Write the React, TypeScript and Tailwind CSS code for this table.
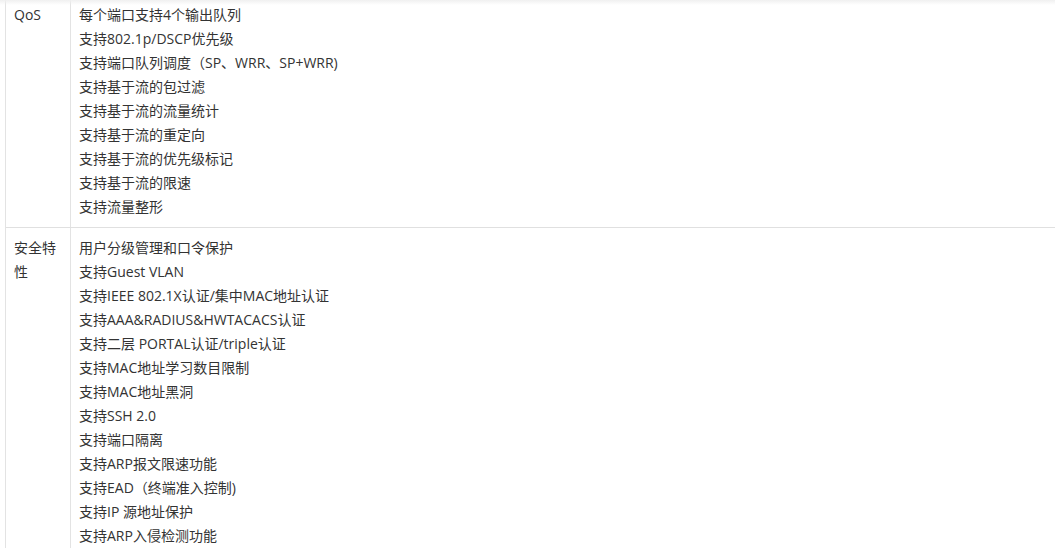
import React from 'react';

const qos = [
  '每个端口支持4个输出队列',
  '支持802.1p/DSCP优先级',
  '支持端口队列调度（SP、WRR、SP+WRR)',
  '支持基于流的包过滤',
  '支持基于流的流量统计',
  '支持基于流的重定向',
  '支持基于流的优先级标记',
  '支持基于流的限速',
  '支持流量整形',
];

const security = [
  '用户分级管理和口令保护',
  '支持Guest VLAN',
  '支持IEEE 802.1X认证/集中MAC地址认证',
  '支持AAA&RADIUS&HWTACACS认证',
  '支持二层 PORTAL认证/triple认证',
  '支持MAC地址学习数目限制',
  '支持MAC地址黑洞',
  '支持SSH 2.0',
  '支持端口隔离',
  '支持ARP报文限速功能',
  '支持EAD（终端准入控制)',
  '支持IP 源地址保护',
  '支持ARP入侵检测功能',
];

const rows = [
  { label: 'QoS', items: qos, first: true },
  { label: '安全特性', items: security, first: false },
];

export default function App() {
  return (
    <div
      className="relative w-[1055px] h-[548px] overflow-hidden bg-white text-[14px] leading-[24px] text-[#333]"
      style={{ fontFamily: '"Open Sans", "Noto Sans CJK SC", sans-serif' }}
    >
      <div className="absolute top-0 left-0 right-0 h-[5px] bg-gradient-to-b from-[#f0f0f0] to-white/0" />
      <div className="ml-[5px] w-[1070px] border-l border-[#e3e3e3]">
        {rows.map((row) => (
          <div key={row.label} className={`flex ${row.first ? '' : 'border-t border-[#e0e0e0]'}`}>
            <div className={`w-[65px] shrink-0 px-2 pb-2 border-r border-[#e3e3e3] ${row.first ? 'pt-[3px]' : 'pt-2'}`}>
              {row.label}
            </div>
            <div className={`flex-1 px-2 pb-2 ${row.first ? 'pt-[3px]' : 'pt-2'}`}>
              {row.items.map((t) => (
                <div key={t}>{t}</div>
              ))}
            </div>
          </div>
        ))}
      </div>
    </div>
  );
}
